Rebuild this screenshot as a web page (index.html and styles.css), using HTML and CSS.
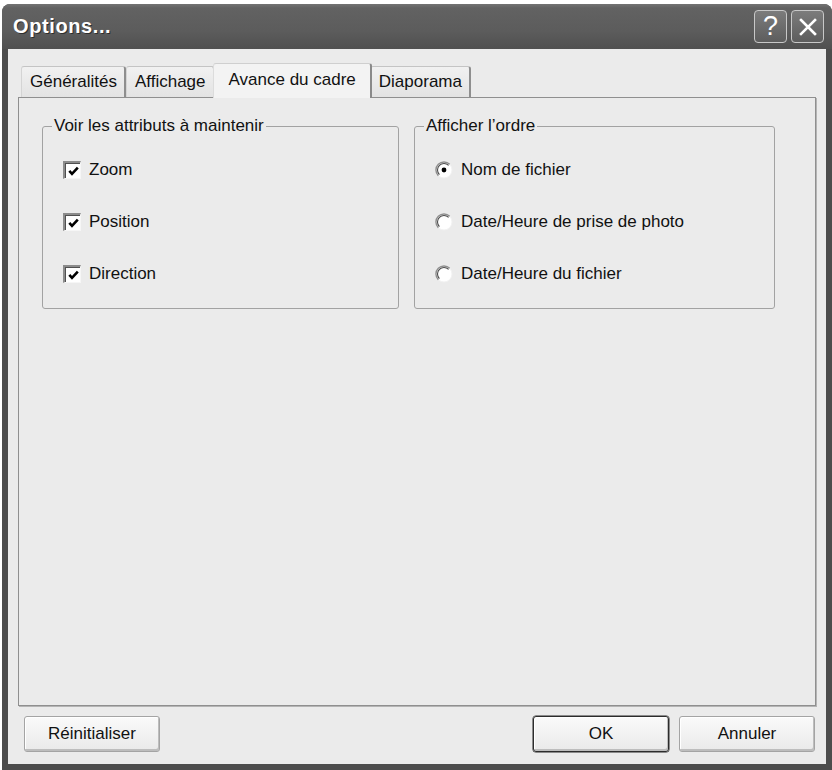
FILE: index.html
```html
<!DOCTYPE html>
<html>
<head>
  <meta charset="utf-8">
  <title>Options...</title>
  <link rel="stylesheet" href="styles.css">
</head>
<body>
  <div class="window">
    <div class="titlebar">
      <div class="title">Options...</div>
      <div class="caption-buttons">
        <div class="caption-button">?</div>
        <div class="caption-button">
          <svg width="22" height="22" viewBox="0 0 22 22">
            <path d="M4 4 L18 18 M18 4 L4 18" stroke="#fff" stroke-width="2.6" stroke-linecap="square"/>
          </svg>
        </div>
      </div>
    </div>

    <div class="client">
      <div class="tabs">
        <div class="tab">Généralités</div>
        <div class="tab">Affichage</div>
        <div class="tab tab-active">Avance du cadre</div>
        <div class="tab">Diaporama</div>
      </div>

      <div class="panel">
        <fieldset class="group group-left">
          <legend>Voir les attributs à maintenir</legend>
          <div class="option">
            <span class="checkbox"><svg width="13" height="13" viewBox="0 0 13 13"><path d="M2.3 5.8 L5 8.8 L10.8 2.6" stroke="#000" stroke-width="2.6" fill="none"/></svg></span>
            Zoom
          </div>
          <div class="option">
            <span class="checkbox"><svg width="13" height="13" viewBox="0 0 13 13"><path d="M2.3 5.8 L5 8.8 L10.8 2.6" stroke="#000" stroke-width="2.6" fill="none"/></svg></span>
            Position
          </div>
          <div class="option">
            <span class="checkbox"><svg width="13" height="13" viewBox="0 0 13 13"><path d="M2.3 5.8 L5 8.8 L10.8 2.6" stroke="#000" stroke-width="2.6" fill="none"/></svg></span>
            Direction
          </div>
        </fieldset>

        <fieldset class="group group-right">
          <legend>Afficher l’ordre</legend>
          <div class="option">
            <svg class="radio" width="18" height="18" viewBox="0 0 18 18">
              <circle cx="9" cy="9" r="8" fill="#fff" stroke="#f2f2f2"/>
              <path d="M3.3 14.7 A8 8 0 0 1 14.7 3.3" stroke="#8e8e8e" stroke-width="1.4" fill="none"/>
              <path d="M4.4 13.6 A6.5 6.5 0 0 1 13.6 4.4" stroke="#4a4a4a" stroke-width="1.1" fill="none"/>
              <circle cx="9" cy="9" r="2.4" fill="#000"/>
            </svg>
            Nom de fichier
          </div>
          <div class="option">
            <svg class="radio" width="18" height="18" viewBox="0 0 18 18">
              <circle cx="9" cy="9" r="8" fill="#fff" stroke="#f2f2f2"/>
              <path d="M3.3 14.7 A8 8 0 0 1 14.7 3.3" stroke="#8e8e8e" stroke-width="1.4" fill="none"/>
              <path d="M4.4 13.6 A6.5 6.5 0 0 1 13.6 4.4" stroke="#4a4a4a" stroke-width="1.1" fill="none"/>
            </svg>
            Date/Heure de prise de photo
          </div>
          <div class="option">
            <svg class="radio" width="18" height="18" viewBox="0 0 18 18">
              <circle cx="9" cy="9" r="8" fill="#fff" stroke="#f2f2f2"/>
              <path d="M3.3 14.7 A8 8 0 0 1 14.7 3.3" stroke="#8e8e8e" stroke-width="1.4" fill="none"/>
              <path d="M4.4 13.6 A6.5 6.5 0 0 1 13.6 4.4" stroke="#4a4a4a" stroke-width="1.1" fill="none"/>
            </svg>
            Date/Heure du fichier
          </div>
        </fieldset>
      </div>

      <div class="footer">
        <button class="button">Réinitialiser</button>
        <div class="footer-right">
          <button class="button button-default">OK</button>
          <button class="button">Annuler</button>
        </div>
      </div>
    </div>
  </div>
</body>
</html>
```

FILE: styles.css
```css
body {
  margin: 0;
  background-color: #ffffff;
  color: #111111;
  font-family: "Liberation Sans", Arial, sans-serif;
  font-size: 17px;
}

.window {
  margin: 4px 0 0 2px;
  width: 830px;
  height: 766px;
  background-color: #4c4c4c;
  border-radius: 8px 8px 0 0;
  display: flex;
  flex-direction: column;
}

.titlebar {
  height: 45px;
  display: flex;
  align-items: center;
  padding: 0 8px 0 11px;
  border-radius: 8px 8px 0 0;
  background: linear-gradient(#737373 0, #626262 4px, #5c5c5c 60%, #505050 100%);
}

.title {
  color: #ffffff;
  font-weight: bold;
  font-size: 20px;
  letter-spacing: 0.6px;
  text-shadow: 1px 1px 0 #2e2e2e;
}

.caption-buttons {
  margin-left: auto;
  display: flex;
  gap: 4px;
}

.caption-button {
  width: 31px;
  height: 31px;
  border: 1px solid #c8c8c8;
  border-radius: 4px;
  background: linear-gradient(#7c7c7c, #5d5d5d);
  color: #ffffff;
  font-size: 27px;
  display: flex;
  align-items: center;
  justify-content: center;
}

.client {
  flex: 1;
  margin: 0 6px 6px;
  background-color: #ebebeb;
  display: flex;
  flex-direction: column;
  padding: 0 10px;
}

.tabs {
  display: flex;
  align-items: flex-end;
  height: 34px;
  margin-top: 14px;
  padding-left: 3px;
}

.tab {
  height: 30px;
  line-height: 30px;
  padding: 0 7px 0 8px;
  background: linear-gradient(#f1f1f1, #e3e3e3);
  border-top: 1px solid #c4c4c4;
  border-left: 1px solid #d4d4d4;
  border-right: 2px solid #8e8e8e;
  border-radius: 3px 3px 0 0;
}

.tab-active {
  height: 34px;
  line-height: 32px;
  padding: 0 14px 0 15px;
  margin: 0 -2px -1px -2px;
  background: #f3f3f3;
  border-top: 1px solid #cfcfcf;
  border-left: 1px solid #dcdcdc;
  border-right: 2px solid #8a8a8a;
  position: relative;
  z-index: 1;
}

.panel {
  flex: 1;
  display: flex;
  align-items: flex-start;
  gap: 15px;
  padding: 18px 0 0 23px;
  background-color: #ebebeb;
  border: 1px solid #8f8f8f;
  box-shadow: 1px 1px 0 #b4b4b4;
}

.group {
  box-sizing: border-box;
  margin: 0;
  padding: 0 0 24px 20px;
  border: 1px solid #a2a2a2;
  border-radius: 3px;
  min-width: 0;
}

.group legend {
  padding: 0 2px;
  margin-left: -11px;
  line-height: 20px;
}

.group-left {
  width: 357px;
}

.group-right {
  width: 361px;
}

.option {
  display: flex;
  align-items: center;
  gap: 8px;
  height: 20px;
  margin-top: 32px;
}

.group legend + .option {
  margin-top: 24px;
}

.checkbox {
  box-sizing: border-box;
  flex: none;
  width: 18px;
  height: 18px;
  background-color: #ffffff;
  border-style: solid;
  border-width: 2px 1px 1px 2px;
  border-color: #8c8c8c #f6f6f6 #f6f6f6 #8c8c8c;
  box-shadow: inset 1px 1px 0 #505050;
  display: flex;
  align-items: center;
  justify-content: center;
  padding: 1px 0 0 1px;
}

.radio {
  flex: none;
}

.footer {
  display: flex;
  justify-content: space-between;
  padding: 10px 1px 12px 6px;
}

.footer-right {
  display: flex;
  gap: 10px;
}

.button {
  width: 136px;
  height: 36px;
  font-family: "Liberation Sans", Arial, sans-serif;
  font-size: 17px;
  color: #111111;
  border: 1px solid #a4a4a4;
  border-radius: 3px;
  background: linear-gradient(#fafafa, #e9e9e9);
  box-shadow: inset -1px -2px 0 #bdbdbd, inset 1px 1px 0 #ffffff;
  padding: 0;
}

.button-default {
  border: 1px solid #2c2c2c;
  box-shadow: inset -1px -2px 0 #bdbdbd, inset 1px 1px 0 #ffffff, 0 0 0 0.5px #2c2c2c;
}
```
